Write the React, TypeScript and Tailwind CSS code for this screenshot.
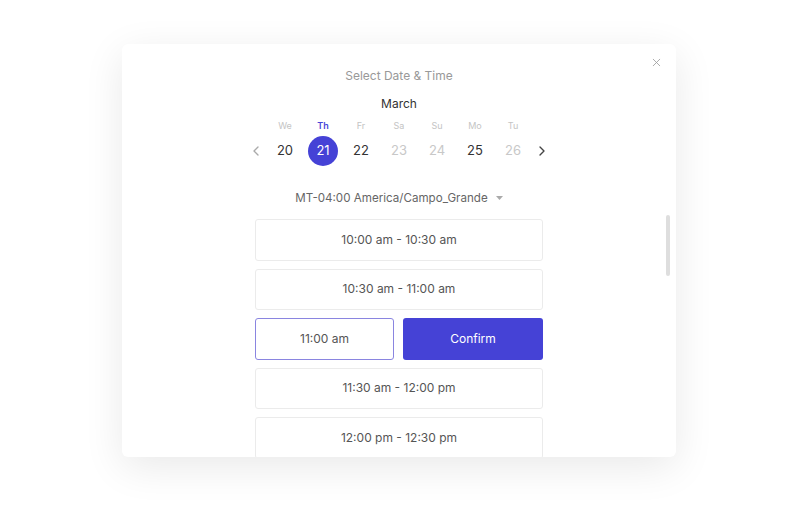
import { ChevronLeft, ChevronRight, X } from 'lucide-react';

const days = [
  { label: 'We', date: 20, available: true },
  { label: 'Th', date: 21, available: true, selected: true },
  { label: 'Fr', date: 22, available: true },
  { label: 'Sa', date: 23, available: false },
  { label: 'Su', date: 24, available: false },
  { label: 'Mo', date: 25, available: true },
  { label: 'Tu', date: 26, available: false },
];

const slotsBefore = ['10:00 am - 10:30 am', '10:30 am - 11:00 am'];
const slotsAfter = ['11:30 am - 12:00 pm', '12:00 pm - 12:30 pm'];

const Slot = ({ text }: { text: string }) => (
  <button className="flex h-[41.5px] w-full shrink-0 items-center justify-center rounded-[3px] border border-[#ebebeb] bg-white text-[12px] text-[#555]">
    {text}
  </button>
);

const App = () => {
  return (
    <div
      className="h-[524px] w-[800px] overflow-hidden bg-white pl-[122px] pt-[44px]"
      style={{ fontFamily: 'Inter, "Noto Sans", sans-serif' }}
    >
      <div className="relative flex h-[413px] w-[554px] flex-col items-center overflow-hidden rounded-md bg-white shadow-[0_10px_40px_rgba(0,0,0,0.09)]">
        {/* close */}
        <button className="absolute right-[13px] top-[12px] text-[#9a9a9a]">
          <X size={13} strokeWidth={1.5} />
        </button>

        <h2 className="mt-[24px] text-[12px] leading-4 text-[#999]">Select Date &amp; Time</h2>
        <div className="mt-[12px] text-[12px] leading-4 text-[#333]">March</div>

        {/* date strip */}
        <div className="mt-[8px] flex items-end">
          <button className="mb-[7px] flex w-[20px] justify-center text-[#aaa]">
            <ChevronLeft size={16} strokeWidth={2} />
          </button>
          {days.map((d) => (
            <div key={d.date} className="flex w-[38px] flex-col items-center">
              <span
                className={
                  d.selected
                    ? 'text-[9px] font-semibold leading-3 text-[#4845d8]'
                    : 'text-[9px] leading-3 text-[#c4c4c4]'
                }
              >
                {d.label}
              </span>
              <span
                className={
                  d.selected
                    ? 'mt-[4px] flex h-[30px] w-[30px] items-center justify-center rounded-full bg-[#4542d6] text-[13px] text-white'
                    : d.available
                      ? 'mt-[4px] flex h-[30px] w-[30px] items-center justify-center text-[13px] text-[#333]'
                      : 'mt-[4px] flex h-[30px] w-[30px] items-center justify-center text-[13px] text-[#c8c8c8]'
                }
              >
                {d.date}
              </span>
            </div>
          ))}
          <button className="mb-[7px] flex w-[20px] justify-center text-[#444]">
            <ChevronRight size={16} strokeWidth={2} />
          </button>
        </div>

        {/* timezone */}
        <div className="mt-[24px] flex items-center text-[11.6px] leading-4 text-[#666]">
          <span>MT-04:00 America/Campo_Grande</span>
          <svg className="ml-[8px]" width="7" height="4" viewBox="0 0 7 4">
            <path d="M0 0h7L3.5 4z" fill="#aaa" />
          </svg>
        </div>

        {/* slots */}
        <div className="mt-[13px] flex w-[288px] flex-col gap-2">
          {slotsBefore.map((s) => (
            <Slot key={s} text={s} />
          ))}
          <div className="flex shrink-0 gap-[9px]">
            <button className="flex h-[41.5px] w-[139px] items-center justify-center rounded-[3px] border border-[#8a85e0] bg-white text-[12px] text-[#555]">
              11:00 am
            </button>
            <button className="flex h-[41.5px] w-[140px] items-center justify-center rounded-[3px] bg-[#4542d6] text-[12px] text-white">
              Confirm
            </button>
          </div>
          {slotsAfter.map((s) => (
            <Slot key={s} text={s} />
          ))}
        </div>

        {/* scrollbar */}
        <div className="absolute right-[6px] top-[171px] h-[61px] w-[4px] rounded-full bg-[#dedede]" />
      </div>
    </div>
  );
};

export default App;
